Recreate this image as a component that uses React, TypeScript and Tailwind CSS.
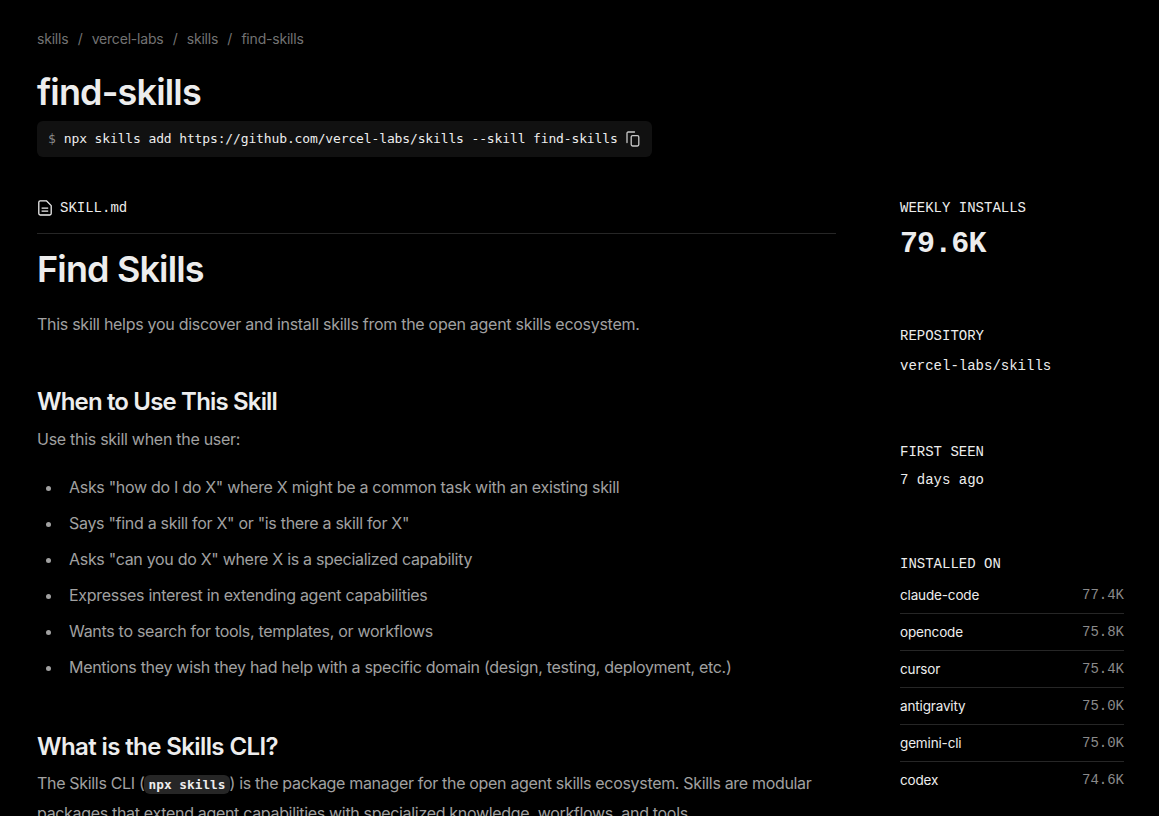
import React from 'react';

const sans = "font-['Inter','Noto_Sans',sans-serif]";

const whenItems = [
  'Asks "how do I do X" where X might be a common task with an existing skill',
  'Says "find a skill for X" or "is there a skill for X"',
  'Asks "can you do X" where X is a specialized capability',
  'Expresses interest in extending agent capabilities',
  'Wants to search for tools, templates, or workflows',
  'Mentions they wish they had help with a specific domain (design, testing, deployment, etc.)',
];

const installs = [
  { name: 'claude-code', count: '77.4K' },
  { name: 'opencode', count: '75.8K' },
  { name: 'cursor', count: '75.4K' },
  { name: 'antigravity', count: '75.0K' },
  { name: 'gemini-cli', count: '75.0K' },
  { name: 'codex', count: '74.6K' },
];

const CopyIcon: React.FC = () => (
  <svg width="14" height="16" viewBox="0 0 14 16" fill="none" stroke="#c8c8c8" strokeWidth="1.3" className="ml-[8px] shrink-0">
    <path d="M1 11.5V2.2C1 1.5 1.5 1 2.2 1H8.5" strokeLinecap="round" />
    <rect x="5.2" y="4.6" width="7.6" height="10.4" rx="1.4" />
  </svg>
);

const FileIcon: React.FC = () => (
  <svg width="14" height="16" viewBox="0 0 14 16" fill="none" stroke="#ededed" strokeWidth="1.3" className="shrink-0">
    <path d="M2.2 0.8H8.4L13.2 5.6V13.6C13.2 14.4 12.6 15 11.8 15H2.2C1.4 15 0.8 14.4 0.8 13.6V2.2C0.8 1.4 1.4 0.8 2.2 0.8Z" strokeLinejoin="round" />
    <path d="M3.6 8.2H10.2M3.6 11.2H10.2" />
  </svg>
);

const Breadcrumb: React.FC = () => {
  const parts = ['skills', 'vercel-labs', 'skills', 'find-skills'];
  return (
    <nav className="flex h-[20px] items-center text-[14px] leading-[20px] tracking-[-0.2px] text-[#737373]">
      {parts.map((part, i) => (
        <React.Fragment key={i}>
          {i > 0 && <span className="mx-[9.2px]">/</span>}
          <span>{part}</span>
        </React.Fragment>
      ))}
    </nav>
  );
};

const Sidebar: React.FC = () => (
  <aside className="w-[224px] shrink-0 font-['Liberation_Mono',monospace] text-[#ededed]">
    <div className="pt-[1px] text-[14px] leading-[20px]">WEEKLY INSTALLS</div>
    <div className="mt-[8px] text-[30px] leading-[36px] font-bold tracking-[-0.9px]">79.6K</div>
    <div className="mt-[64px] text-[14px] leading-[20px]">REPOSITORY</div>
    <div className="mt-[10px] text-[14px] leading-[20px]">vercel-labs/skills</div>
    <div className="mt-[66px] text-[14px] leading-[20px]">FIRST SEEN</div>
    <div className="mt-[8px] text-[14px] leading-[20px]">7 days ago</div>
    <div className="mt-[64px] text-[14px] leading-[20px]">INSTALLED ON</div>
    <div className="mt-[3px]">
      {installs.map((row, i) => (
        <div
          key={row.name}
          className={`flex h-[37px] items-center justify-between text-[14px] ${
            i < installs.length - 1 ? 'border-b border-[#262626]' : ''
          }`}
        >
          <span className={`${sans} text-[13.5px] tracking-[-0.15px]`}>{row.name}</span>
          <span className="text-[#8a8a8a]">{row.count}</span>
        </div>
      ))}
    </div>
  </aside>
);

export default function App() {
  return (
    <div className={`h-[816px] overflow-hidden bg-black pl-[37px] pr-[35px] pt-[29px] ${sans}`}>
      <Breadcrumb />

      <h1 className="mt-[23px] text-[36px] leading-[40px] font-semibold tracking-[-0.85px] text-[#ededed]">
        find-skills
      </h1>

      <div className="mt-[9px] inline-flex h-[36px] items-center rounded-[6px] bg-[#111111] pl-[11px] pr-[12px] font-['DejaVu_Sans_Mono',monospace] text-[13px] text-[#ededed]">
        <span className="mr-[8px] text-[#8a8a8a]">$</span>
        <span className="tracking-[-0.135px]">npx skills add https://github.com/vercel-labs/skills --skill find-skills</span>
        <CopyIcon />
      </div>

      <div className="mt-[40px] flex gap-[64px]">
        <main className="w-[799px] shrink-0">
          <div className="flex h-[22px] items-center gap-[8px] pl-[1px] font-['Liberation_Mono',monospace] text-[14px] text-[#ededed]">
            <FileIcon />
            <span>SKILL.md</span>
          </div>
          <div className="mt-[14px] border-t border-[#262626]" />

          <h1 className="mt-[15px] text-[36px] leading-[40px] font-semibold tracking-[-0.85px] text-[#ededed]">
            Find Skills
          </h1>
          <p className="mt-[21px] text-[16px] leading-[28px] tracking-[-0.28px] text-[#a1a1a1]">
            This skill helps you discover and install skills from the open agent skills ecosystem.
          </p>

          <h2 className="mt-[48px] text-[24px] leading-[32px] font-semibold tracking-[-0.83px] text-[#ededed]">
            When to Use This Skill
          </h2>
          <p className="mt-[7px] text-[16px] leading-[28px] tracking-[-0.28px] text-[#a1a1a1]">
            Use this skill when the user:
          </p>
          <ul className="mt-[20px] pl-[9px] text-[16px] leading-[28px] tracking-[-0.3px] text-[#a1a1a1]">
            {whenItems.map((item) => (
              <li key={item} className="mb-[8px] flex items-start">
                <span className="mr-[18px] mt-[13px] h-[5px] w-[5px] shrink-0 rounded-full bg-[#a1a1a1]" />
                <span>{item}</span>
              </li>
            ))}
          </ul>

          <h2 className="mt-[50px] text-[24px] leading-[32px] font-semibold tracking-[-0.6px] text-[#ededed]">
            What is the Skills CLI?
          </h2>
          <p className="mt-[6px] text-[16px] leading-[28px] tracking-[-0.32px] text-[#a1a1a1]">
            The Skills CLI (
            <code className="rounded-[6px] bg-[#262626] px-[4px] py-[2px] font-['DejaVu_Sans_Mono',monospace] text-[12.8px] font-bold tracking-normal text-[#ededed]">
              npx skills
            </code>
            ) is the package manager for the open agent skills ecosystem. Skills are modular packages that extend agent
            capabilities with specialized knowledge, workflows, and tools.
          </p>
        </main>
        <Sidebar />
      </div>
    </div>
  );
}
